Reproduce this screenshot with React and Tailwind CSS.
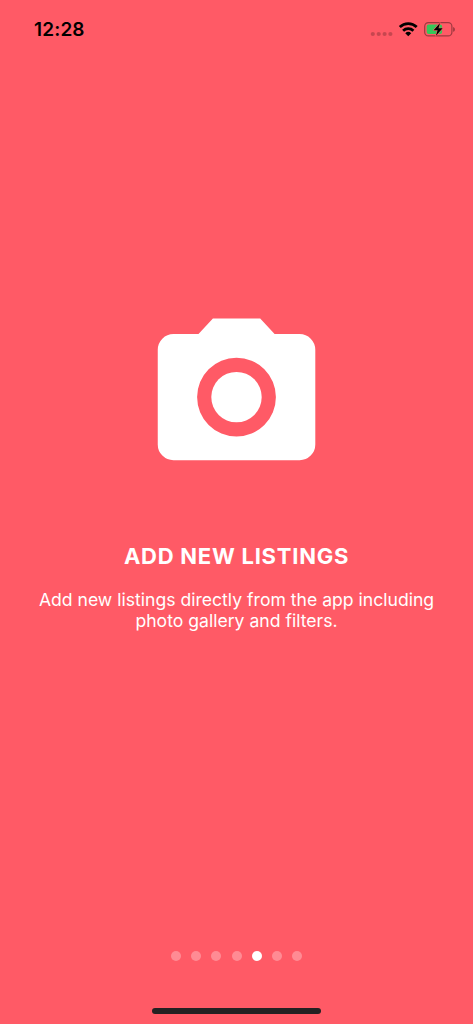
const PAGES = 7;
const ACTIVE_PAGE = 4;

function StatusBar() {
  return (
    <header className="flex h-[58px] items-center justify-between pl-[34px] pr-[18px]">
      <time className="pt-px text-[19px] leading-6 font-semibold tracking-[0.15px] text-black">12:28</time>
      <svg width="85" height="18" viewBox="370 20 85 18" aria-hidden="true">
        <g fill="#000" fillOpacity="0.22">
          <circle cx="372.8" cy="34" r="2.1" />
          <circle cx="378.7" cy="34" r="2.1" />
          <circle cx="384.6" cy="34" r="2.1" />
          <circle cx="390.4" cy="34" r="2.1" />
        </g>
        <g fill="none" stroke="#000" strokeWidth="2.8">
          <path d="M399.8 27.1a12.2 12.2 0 0 1 16.9 0" />
          <path d="M403.1 30.7a7.5 7.5 0 0 1 10.3 0" />
        </g>
        <path d="M408.25 36.2l-3-3a4.3 4.3 0 0 1 6 0z" fill="#000" />
        <rect x="424.7" y="22.7" width="27.2" height="13.2" rx="3.7" fill="none" stroke="#000" strokeOpacity="0.38" strokeWidth="1.2" />
        <path d="M453.2 27v4.8c2.2-.8 2.2-4 0-4.8z" fill="#000" fillOpacity="0.42" />
        <rect x="426.7" y="24.6" width="15.4" height="9.5" rx="2" fill="#34c759" />
        <path d="M440 22.9l-6.4 7.3h4l-1.8 5.7 6.8-7.7h-4.1z" fill="#000" stroke="#ff5a66" strokeWidth="1.1" strokeLinejoin="round" paintOrder="stroke" />
      </svg>
    </header>
  );
}

function CameraIcon() {
  return (
    <svg width="159" height="144" viewBox="157 317 159 144" fill="#fff" aria-hidden="true">
      <path
        fillRule="evenodd"
        d="M212.9 318.4h47.3l14.4 15.7h25a15.75 15.75 0 0 1 15.7 15.75v94.6a15.75 15.75 0 0 1-15.7 15.75H173.5a15.75 15.75 0 0 1-15.75-15.75v-94.6a15.75 15.75 0 0 1 15.75-15.75h25zM236.5 357.7a39.4 39.4 0 1 0 0 78.8a39.4 39.4 0 1 0 0-78.8z"
      />
      <circle cx="236.5" cy="397.1" r="25.2" />
    </svg>
  );
}

export default function App() {
  return (
    <div className="flex h-[1024px] w-[473px] flex-col overflow-hidden bg-[#ff5a66] font-['Inter',sans-serif]">
      <StatusBar />
      <main className="flex flex-1 flex-col items-center pt-[259px] text-white">
        <CameraIcon />
        <h1 className="mt-[80px] text-[22px] leading-[30px] font-bold tracking-[0.75px] whitespace-nowrap">
          ADD NEW LISTINGS
        </h1>
        <p className="mt-[18px] text-center text-[17.6px] leading-[21px] whitespace-nowrap">
          Add new listings directly from the app including
          <br />
          photo gallery and filters.
        </p>
      </main>
      <nav className="flex justify-center gap-[10.17px] pb-[46.5px]" aria-label="Onboarding pages">
        {Array.from({ length: PAGES }, (_, i) => (
          <span
            key={i}
            className={`size-[10px] rounded-full ${i === ACTIVE_PAGE ? "bg-white" : "bg-white/30"}`}
          />
        ))}
      </nav>
      <div className="mb-[10.5px] ml-[152px] h-[6px] w-[169px] shrink-0 rounded-full bg-[#242122]" />
    </div>
  );
}
